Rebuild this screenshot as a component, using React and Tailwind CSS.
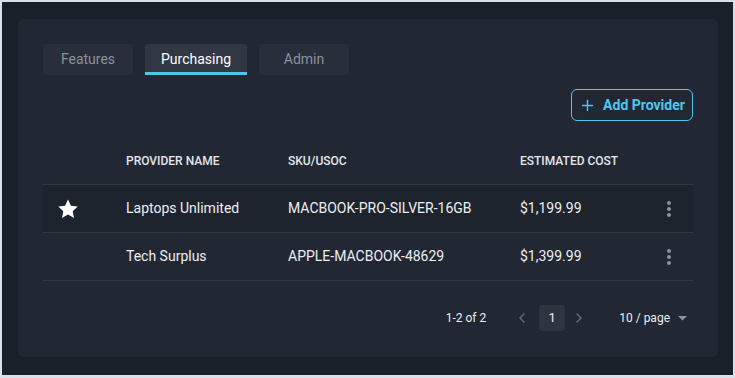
import { Plus, ChevronLeft, ChevronRight } from 'lucide-react';

const rows = [
  { name: 'Laptops Unlimited', sku: 'MACBOOK-PRO-SILVER-16GB', cost: '$1,199.99', starred: true },
  { name: 'Tech Surplus', sku: 'APPLE-MACBOOK-48629', cost: '$1,399.99', starred: false },
];

function Star() {
  return (
    <svg width="24" height="24" viewBox="0 0 24 24" fill="#ffffff">
      <path d="M12 2.5l2.9 6.2 6.8.8-5 4.7 1.3 6.7L12 17.6l-6 3.3 1.3-6.7-5-4.7 6.8-.8z" />
    </svg>
  );
}

function Kebab() {
  return (
    <div className="flex flex-col items-center gap-[2px]">
      <span className="w-[4px] h-[4px] rounded-full bg-[#8d939b]" />
      <span className="w-[4px] h-[4px] rounded-full bg-[#8d939b]" />
      <span className="w-[4px] h-[4px] rounded-full bg-[#8d939b]" />
    </div>
  );
}

export default function App() {
  return (
    <div className="w-[735px] h-[378px] bg-[#d9e1e8] pt-[2px] pl-[2px] pr-[2px] pb-[3px] font-['Roboto',sans-serif]">
      <div className="w-full h-full bg-[#18202a] pt-[17px] pl-[16px] pr-[15px]">
        <div className="w-[700px] h-[338px] bg-[#222833] rounded-[5px] pt-[25px] px-[25px]">
          {/* tabs */}
          <div className="flex gap-[12px] h-[31px]">
            <div className="w-[90px] rounded-[4px] bg-[#292f3a] text-[#8a919a] text-[14px] flex items-center justify-center">Features</div>
            <div className="w-[102px] rounded-t-[4px] bg-[#313843] text-white text-[14px] flex items-center justify-center border-b-[3px] border-[#4fc6ec] pt-[3px]">Purchasing</div>
            <div className="w-[90px] rounded-[4px] bg-[#292f3a] text-[#8a919a] text-[14px] flex items-center justify-center">Admin</div>
          </div>

          <div className="flex justify-end mt-[14px]">
            <button className="h-[32px] w-[122px] rounded-[6px] border border-[#4fc6ec] text-[#4fc6ec] text-[14px] font-bold flex items-center justify-center gap-[7px]">
              <Plus size={17} strokeWidth={2} />
              Add Provider
            </button>
          </div>

          {/* table */}
          <div className="mt-[16px] text-[14px]">
            <div className="grid grid-cols-[83px_162px_232px_1fr] h-[48px] items-center border-b border-[#333a46] text-[12px] font-medium text-[#e3e6ea]">
              <div />
              <div>PROVIDER NAME</div>
              <div>SKU/USOC</div>
              <div>ESTIMATED COST</div>
            </div>
            {rows.map((r, i) => (
              <div
                key={r.sku}
                className={`grid grid-cols-[83px_162px_232px_1fr] h-[48px] items-center border-b border-[#333a46] text-[#eceef1] ${i === 0 ? 'bg-[#1e242e]' : ''}`}
              >
                <div className="flex pl-[13px]">{r.starred && <Star />}</div>
                <div>{r.name}</div>
                <div>{r.sku}</div>
                <div className="flex items-center justify-between pr-[22px]">
                  <span>{r.cost}</span>
                  <Kebab />
                </div>
              </div>
            ))}
          </div>

          {/* pagination */}
          <div className="flex items-center justify-end mt-[24px] h-[26px] text-[12px] text-[#eceef1] pr-[6px]">
            <span className="mr-[28px]">1-2 of 2</span>
            <ChevronLeft size={16} className="text-[#666d77]" />
            <div className="w-[26px] h-[26px] rounded-[4px] bg-[#2f3540] flex items-center justify-center ml-[9px] mr-[6px] text-[13px]">1</div>
            <ChevronRight size={16} className="text-[#666d77]" />
            <span className="ml-[32px]">10 / page</span>
            <svg width="9" height="5" viewBox="0 0 9 5" className="ml-[8px]" fill="#8d939b">
              <path d="M0 0h9L4.5 4.5z" />
            </svg>
          </div>
        </div>
      </div>
    </div>
  );
}
